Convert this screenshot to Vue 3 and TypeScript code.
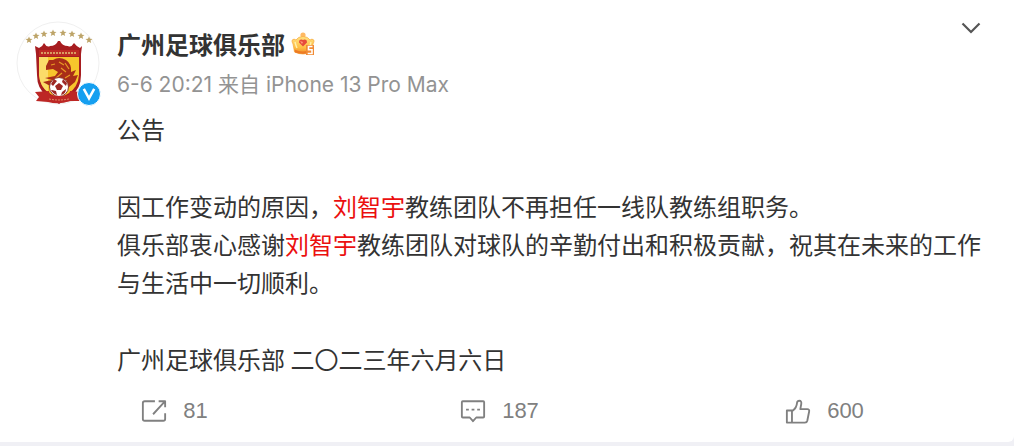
<script setup lang="ts">
interface Segment {
  text: string
  highlight?: boolean
}

const paragraphs: Segment[][][] = [
  [[{ text: '公告' }]],
  [
    [
      { text: '因工作变动的原因，' },
      { text: '刘智宇', highlight: true },
      { text: '教练团队不再担任一线队教练组职务。' },
    ],
    [
      { text: '俱乐部衷心感谢' },
      { text: '刘智宇', highlight: true },
      { text: '教练团队对球队的辛勤付出和积极贡献，祝其在未来的工作与生活中一切顺利。' },
    ],
  ],
  [[{ text: '广州足球俱乐部 二〇二三年六月六日' }]],
]

const starPoints = '0,-3.6 1,-1.2 3.5,-1.1 1.5,0.6 2.2,3 0,1.7 -2.2,3 -1.5,0.6 -3.5,-1.1 -1,-1.2'
const stars = [
  [13, 19], [20, 15], [28, 13], [37, 12], [47, 12], [56, 13], [65, 15], [73, 19],
].map(([x, y]) => `translate(${x} ${y})`)
</script>

<template>
  <div class="page">
    <article class="card">
      <header class="header">
        <a class="avatar" href="#" aria-label="广州足球俱乐部">
          <svg class="portrait" viewBox="0 0 84 84" aria-hidden="true">
            <circle cx="42" cy="42" r="41" fill="#fff" stroke="#f0f0f0" />
            <g fill="#bda468">
              <polygon v-for="s in stars" :key="s" :points="starPoints" :transform="s" />
            </g>
            <g transform="translate(1 1)">
              <path d="M18 24 L22 26 Q26 24 27 21 Q30 26 33 24 Q39 24 41 19 H43 Q45 24 51 24 Q54 26 57 21 Q60 25 63 26 L65 24 L64 32 V53 Q64 67 54 74 L42 82 L30 74 Q20 67 20 53 L19 32 Z" fill="#a71d20" />
              <path d="M22 35 H62 V53 Q61 65 52 71 L42 77 L32 71 Q23 65 22 53 Z" fill="#f7c52c" />
              <path d="M22 35 H31 V70 Q23 64 22 53 Z" fill="#fbdc69" />
              <path d="M22 28 H62 V34 H22 Z" fill="#bd2923" />
              <path d="M24 31 H60" stroke="#d99a62" stroke-width="2" stroke-dasharray="2 1" />
              <path d="M29 44 L32 38 L36 38 Q42 34 49 38 Q55 42 54 50 L59 48 L56 54 L61 53 L58 60 L52 65 H35 L26 60 L35 58 L28 56 L38 54 L41 50 L36 47 L29 48 Z" fill="#a92d18" />
              <path d="M34 43 L38 42 M42 40 L47 43 M44 46 L49 50 M48 41 L52 47 M39 56 L45 51 M48 56 L53 53" stroke="#e89b25" stroke-width="1.2" />
              <path d="M18 70 L32 69 L33 73 Q42 75 52 73 L53 69 L64 70 L62 74 L64 79 L53 79 Q42 83 31 80 L19 79 L22 75 Z" fill="#bd2725" />
              <circle cx="42" cy="65" r="9.5" fill="#fff" stroke="#8f3930" />
              <path d="M42 61 L46 64 L44 68 H40 L38 64 Z M34 62 L37 57 L40 59 L36 64 Z M46 57 L50 61 L49 64 L45 60 Z M35 68 L39 69 L40 73 Q36 72 34 68 Z M45 70 L49 67 Q49 72 44 73 Z" fill="#9e2824" />
              <path d="M30 73 Q42 75 54 73 V79 Q42 81 30 79 Z" fill="#bd2725" />
              <path d="M32 77 Q42 79 52 77" fill="none" stroke="#e18d65" stroke-dasharray="2 1" />
            </g>
          </svg>
          <svg class="verified" viewBox="0 0 24 24" aria-hidden="true">
            <circle cx="12" cy="12" r="11.5" fill="#159ff0" stroke="#fff" />
            <path d="M6.8 6.8 L12 16.4 L17.2 6.8" fill="none" stroke="#fff" stroke-width="2.5" />
          </svg>
        </a>
        <div class="author">
          <div class="name-row">
            <a class="name" href="#">广州足球俱乐部</a>
            <svg class="crown" viewBox="0 0 24 24" role="img" aria-label="会员等级 5">
              <defs>
                <linearGradient id="crown-gold" x1="0" y1="0" x2="0" y2="1">
                  <stop offset="0" stop-color="#ffe181" />
                  <stop offset="0.6" stop-color="#ffc247" />
                  <stop offset="1" stop-color="#f28b28" />
                </linearGradient>
              </defs>
              <circle cx="12" cy="3" r="2.6" fill="#ffb964" />
              <path d="M1.2 8 Q3 6.2 5 8 Q7 4.5 12 4.5 Q17 4.5 19 8 Q21 6.2 22.8 8 Q23.5 9.5 22 12 L20.5 20 Q12 24 3.5 20 L2 12 Q.5 9.5 1.2 8 Z" fill="url(#crown-gold)" stroke="#f7a83e" stroke-width="0.7" />
              <path d="M3.5 17.5 Q12 21.5 20 17.5 L19.5 20.5 Q12 23 4 20.5 Z" fill="#ed7b24" />
              <path d="M4 10 Q5 14 6 16 M20 10 L19 14" fill="none" stroke="#fff0ad" stroke-width="1.4" />
              <path d="M8.3 8.5 Q10 7 12 8 Q14 7 15.7 8.5 L16 10.5 L12 14.5 L8 10.5 Z" fill="#e64b3b" />
              <path d="M9 9 L12 10 L11 12 Z" fill="#ff9a7b" />
              <path d="M15 13 H23 V23 H15 Z" fill="#f18b35" />
              <path d="M21.5 14.5 H17.5 V17.7 H21 V21.5 H16.7" fill="none" stroke="#fff" stroke-width="1.6" />
            </svg>
          </div>
          <div class="meta"><time>6-6 20:21</time> 来自 iPhone 13 Pro Max</div>
        </div>
        <button class="more" type="button" aria-label="更多">
          <svg viewBox="0 0 20 12" aria-hidden="true">
            <path d="M1.5 1.5 L10 10 L18.5 1.5" fill="none" stroke="#555" stroke-width="2.2" />
          </svg>
        </button>
      </header>

      <div class="content">
        <div v-for="(lines, i) in paragraphs" :key="i" class="paragraph">
          <p v-for="(line, j) in lines" :key="j">
            <template v-for="(part, k) in line" :key="k"><em v-if="part.highlight">{{ part.text }}</em><template v-else>{{ part.text }}</template></template>
          </p>
        </div>
      </div>

      <footer class="actions">
        <button type="button" aria-label="转发 81">
          <svg viewBox="0 0 28 28" aria-hidden="true">
            <path d="M15 3.5 H4 Q2 3.5 2 5.5 V22.5 Q2 24.5 4 24.5 H24 Q26 24.5 26 22.5 V16.5 M13 17.5 L25.5 4 M19 3.5 H26 V10" />
          </svg>
          <span>81</span>
        </button>
        <button type="button" aria-label="评论 187">
          <svg viewBox="0 0 28 28" aria-hidden="true">
            <path d="M3 3.5 H25 Q26 3.5 26 4.5 V20 Q26 21 25 21 H17.5 L14 25 L10.5 21 H3 Q2 21 2 20 V4.5 Q2 3.5 3 3.5 Z M6.5 12.5 H9.5 M12.5 12.5 H15.5 M18.5 12.5 H21.5" />
          </svg>
          <span>187</span>
        </button>
        <button type="button" aria-label="赞 600">
          <svg viewBox="0 0 28 28" aria-hidden="true">
            <path d="M2 13.5 H8.5 Q12.5 10.5 13 5 Q13.3 3 15.5 3 Q18 3 17.5 6.5 L16.5 12 H24 Q26.5 12 26 14.5 L24 24.5 Q23.5 26.5 21.5 26.5 H2 Z M7.5 13.5 V26.5" />
          </svg>
          <span>600</span>
        </button>
      </footer>
    </article>
  </div>
</template>

<style>
body {
  margin: 0;
  background: #f0f0f5;
}
</style>

<style scoped>
.page {
  padding-bottom: 4px;
  font-family: "Noto Sans CJK SC", sans-serif;
}
.card {
  padding: 21px 27px 15px 16px;
  background: #fff;
  border-bottom-right-radius: 6px;
}
.header {
  display: flex;
  align-items: flex-start;
}
.avatar {
  position: relative;
  flex: none;
  width: 84px;
  height: 84px;
  margin-right: 17px;
}
.portrait {
  display: block;
  width: 84px;
  height: 84px;
}
.verified {
  position: absolute;
  right: -1px;
  bottom: -1px;
  width: 24px;
  height: 24px;
}
.author {
  flex: 1;
  min-width: 0;
}
.name-row {
  display: flex;
  align-items: center;
  gap: 6px;
  height: 46px;
}
.name {
  color: #333;
  font-size: 24px;
  font-weight: 700;
  line-height: 36px;
  text-decoration: none;
}
.crown {
  width: 24px;
  height: 24px;
}
.meta {
  color: #939393;
  font-family: Inter, "Noto Sans CJK SC", sans-serif;
  font-size: 21px;
  line-height: 36px;
}
button {
  padding: 0;
  border: 0;
  background: none;
  color: #808080;
  font: inherit;
  cursor: pointer;
}
.more svg {
  display: block;
  width: 20px;
  height: 12px;
}
.more {
  margin-right: 6px;
  padding-top: 1px;
}
.content {
  display: grid;
  gap: 39px;
  margin: 5px 0 0 101px;
  color: #333;
  font-size: 24px;
  line-height: 38px;
}
.content p {
  margin: 0;
}
.content em {
  color: #eb0f0f;
  font-style: normal;
}
.actions {
  display: grid;
  grid-template-columns: repeat(3, 1fr);
  margin: 17px 0 0 -4px;
}
.actions button {
  display: flex;
  align-items: center;
  justify-content: center;
  gap: 16px;
  font-family: "Liberation Sans", Arial, sans-serif;
  font-size: 22px;
  line-height: 32px;
}
.actions svg {
  width: 26px;
  height: 26px;
  fill: none;
  stroke: #808080;
  stroke-width: 2;
  stroke-linejoin: round;
}
</style>
